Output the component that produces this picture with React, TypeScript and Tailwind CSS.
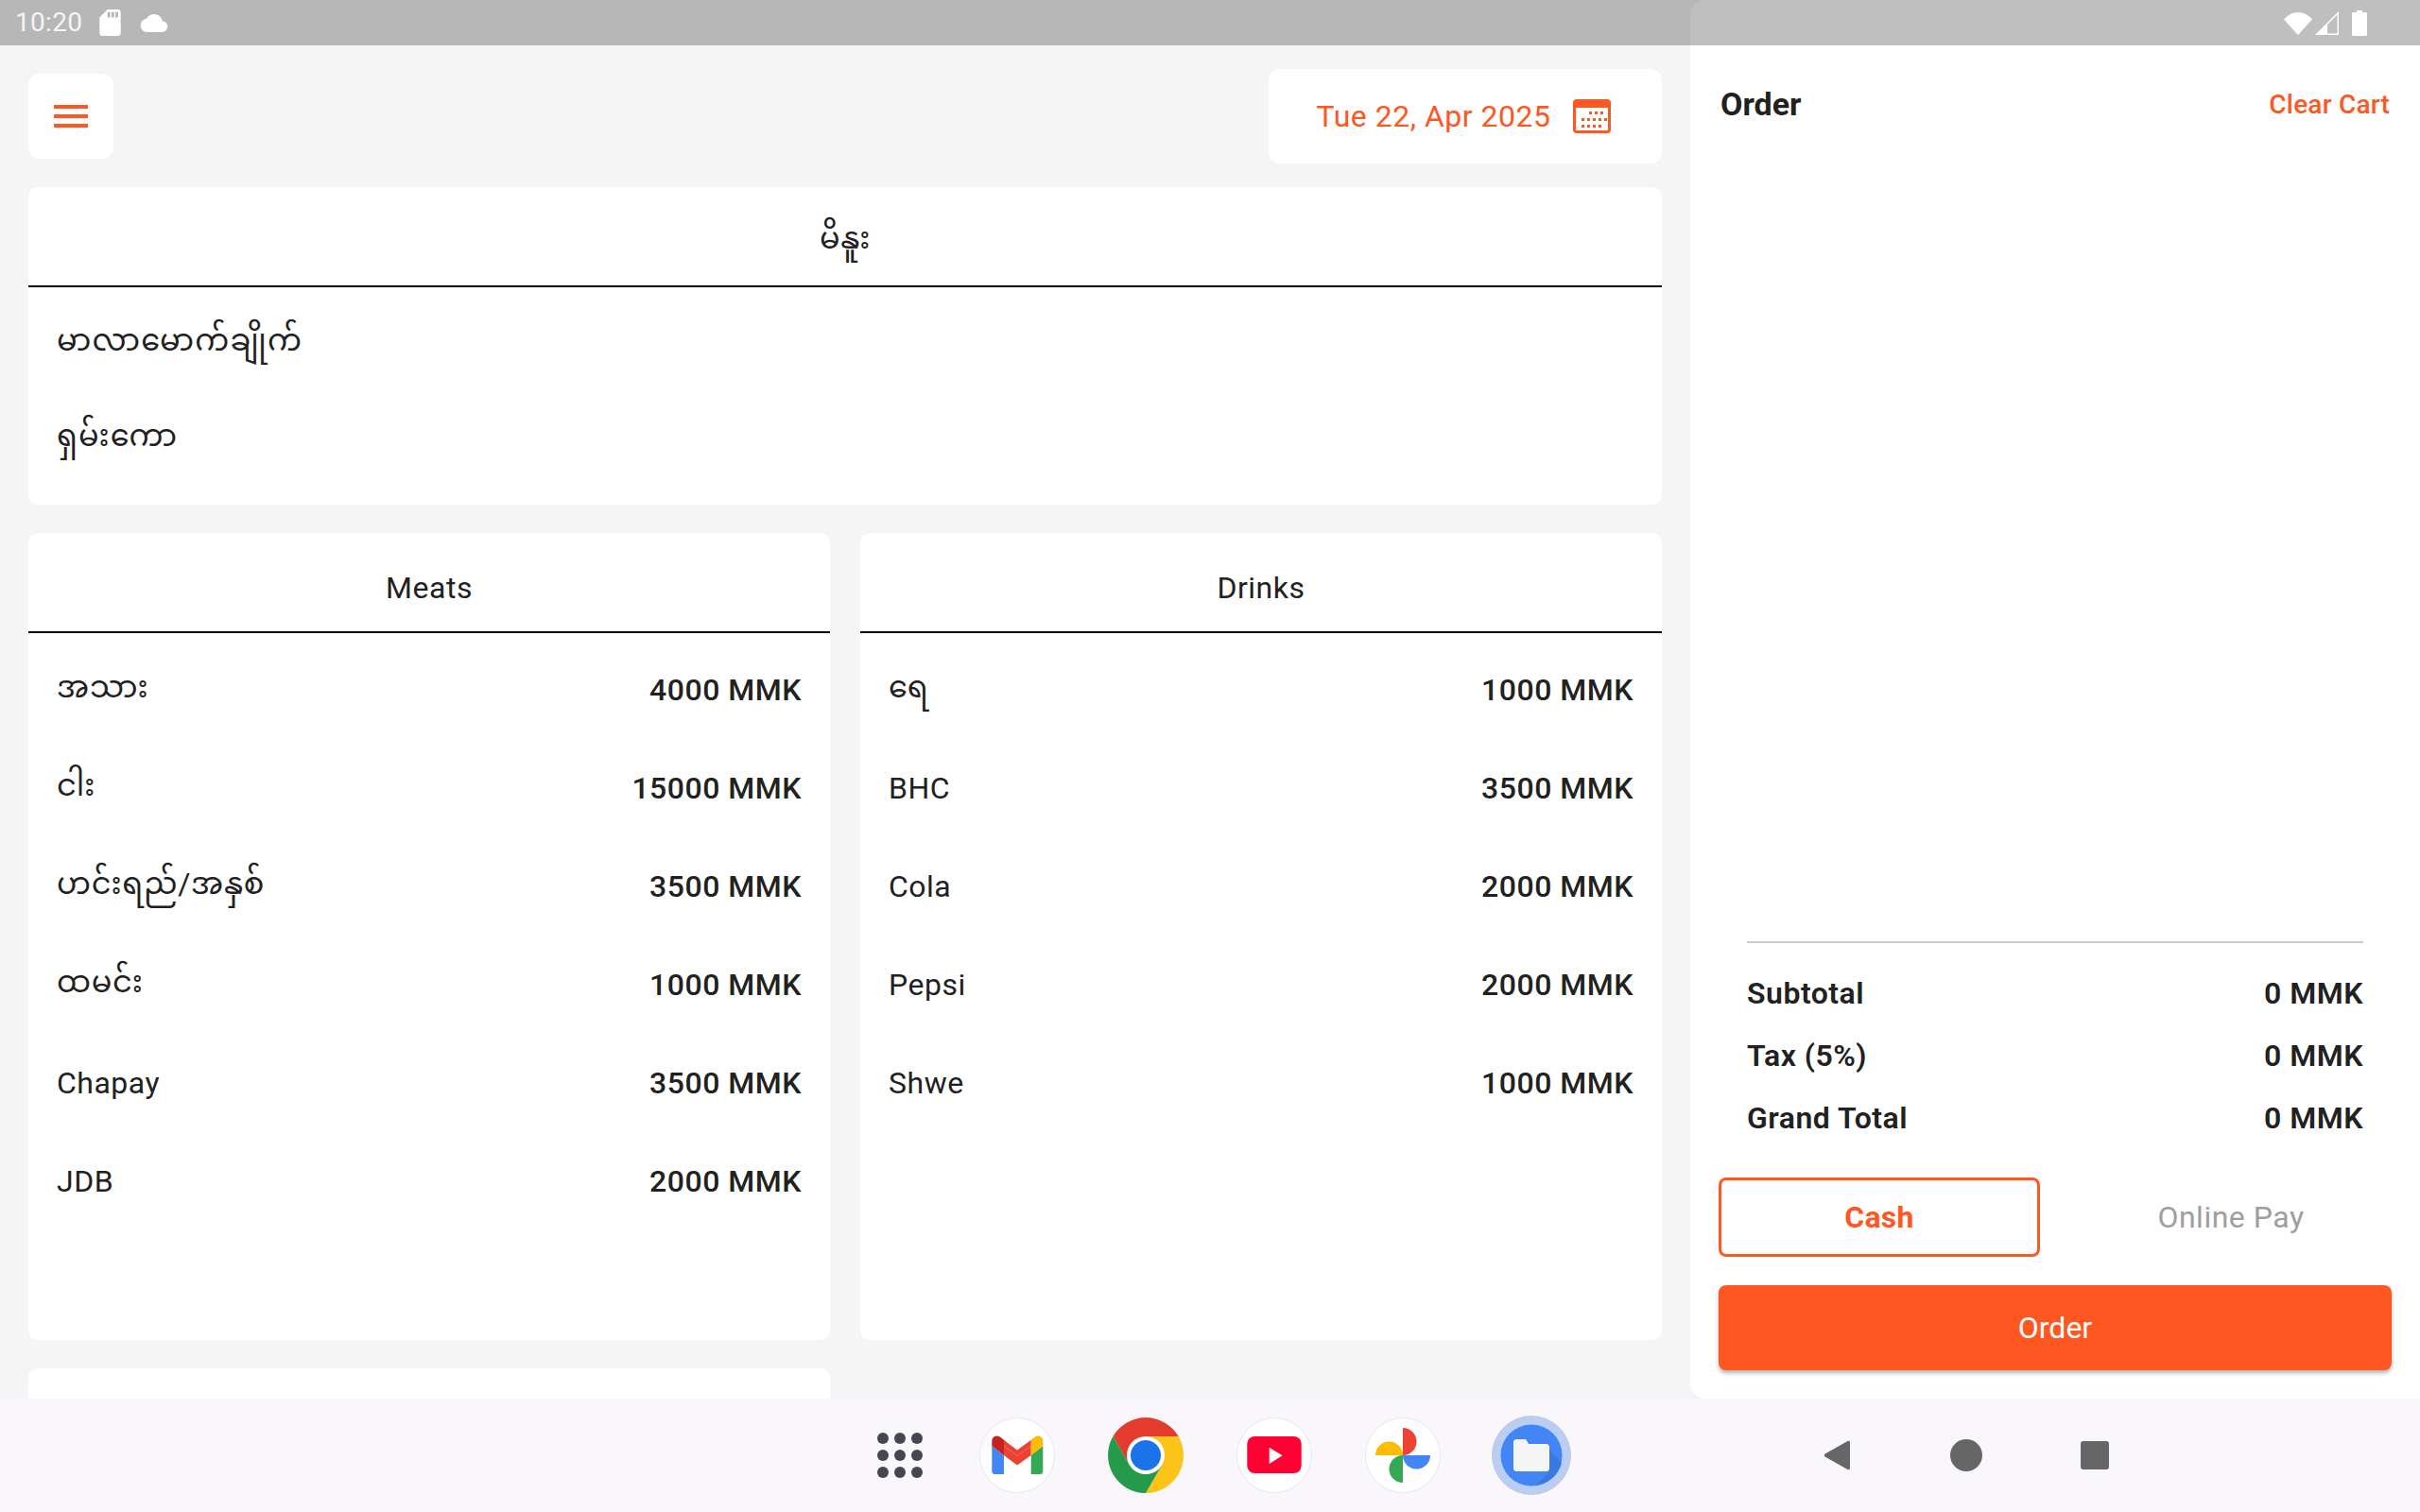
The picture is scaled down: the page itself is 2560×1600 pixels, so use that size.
const menuItems = ["မာလာမောက်ချိုက်", "ရှမ်းကော"];

const meats = [
  { name: "အသား", price: "4000 MMK", burmese: true },
  { name: "ငါး", price: "15000 MMK", burmese: true },
  { name: "ဟင်းရည်/အနှစ်", price: "3500 MMK", burmese: true },
  { name: "ထမင်း", price: "1000 MMK", burmese: true },
  { name: "Chapay", price: "3500 MMK" },
  { name: "JDB", price: "2000 MMK" },
];

const drinks = [
  { name: "ရေ", price: "1000 MMK", burmese: true },
  { name: "BHC", price: "3500 MMK" },
  { name: "Cola", price: "2000 MMK" },
  { name: "Pepsi", price: "2000 MMK" },
  { name: "Shwe", price: "1000 MMK" },
];

const totals = [
  { label: "Subtotal", value: "0 MMK" },
  { label: "Tax (5%)", value: "0 MMK" },
  { label: "Grand Total", value: "0 MMK" },
];

function StatusBar() {
  return (
    <div className="absolute top-0 left-0 right-0 h-[48px] bg-black/25 flex items-center text-white/85">
      <span className="ml-[16px] text-[28px] leading-none tracking-[0.3px]">10:20</span>
      <svg viewBox="4 2 16 20" className="ml-[18px] w-[23px] h-[28px]" fill="#fff">
        <path d="M18 2h-8L4.020 8 4 20c0 1.100.9 2 2 2h12c1.100 0 2-.9 2-2V4c0-1.100-.9-2-2-2zm-6 6h-2V4h2v4zm3 0h-2V4h2v4zm3 0h-2V4h2v4z" />
      </svg>
      <svg viewBox="0 4 24 16" className="ml-[20px] w-[30px] h-[19px]" fill="#fff">
        <path d="M19.350 10.040C18.670 6.590 15.640 4 12 4 9.110 4 6.600 5.640 5.350 8.040 2.340 8.360 0 10.910 0 14c0 3.310 2.690 6 6 6h13c2.760 0 5-2.240 5-5 0-2.640-2.050-4.780-4.650-4.960z" />
      </svg>
      <div className="ml-auto mr-[56px] flex items-center">
        <svg viewBox="0 0 30 25" className="w-[30px] h-[25px]" fill="#fff">
          <path d="M0 8.500C4 4 9 1 15 1s11 3 15 7.500L15 25z" />
        </svg>
        <svg viewBox="0 0 25 25" className="ml-[3px] w-[25px] h-[25px]" fill="#fff">
          <path d="M25 0v25H0zM23.500 3.600L13 14v9.500h10.500z" />
        </svg>
        <svg viewBox="0 0 16 27" className="ml-[14px] w-[16px] h-[27px]" fill="#fff">
          <path d="M5 0h6v2h3.500c.8 0 1.500.7 1.500 1.500v22c0 .8-.7 1.500-1.500 1.500h-13C.7 27 0 26.300 0 25.500v-22C0 2.700.7 2 1.500 2H5z" />
        </svg>
      </div>
    </div>
  );
}

function CalendarIcon() {
  const dots = [
    [17, 13], [23, 13], [29, 13],
    [9, 20], [15, 20], [21, 20], [27, 20], [33, 20],
    [9, 27], [15, 27], [21, 27], [27, 27],
  ];
  return (
    <svg viewBox="0 0 40 36" className="w-[40px] h-[36px]">
      <rect width="40" height="36" rx="4" fill="#ff5722" />
      <rect x="3" y="9" width="34" height="24" rx="1" fill="#fff" />
      {dots.map(([x, y], i) => (
        <rect key={i} x={x} y={y} width="3" height="3" fill="#ff5722" />
      ))}
    </svg>
  );
}

function Card({ title, children, latin }: { title: string; children: React.ReactNode; latin?: boolean }) {
  return (
    <div className="bg-white rounded-[10px] overflow-hidden">
      <div className={`h-[106px] flex items-center justify-center border-b-2 border-black text-[32px] text-[#212121] tracking-[0.5px] ${latin ? "pt-[12px]" : "pt-[4px]"}`}>
        {title}
      </div>
      {children}
    </div>
  );
}

function PriceCard({ title, items }: { title: string; items: { name: string; price: string; burmese?: boolean }[] }) {
  return (
    <Card title={title} latin>
      <div className="h-[748px] pt-[8px] px-[30px]">
        {items.map((item) => (
          <div key={item.name} className="h-[104px] flex items-center justify-between text-[32px] text-[#212121]">
            <span className={item.burmese ? "pb-[6px] tracking-[0.7px]" : "tracking-[0.5px]"}>{item.name}</span>
            <span className="font-medium tracking-[0.5px]">{item.price}</span>
          </div>
        ))}
      </div>
    </Card>
  );
}

function LeftColumn() {
  return (
    <div className="w-[1788px] h-[1480px] overflow-hidden bg-[#f5f5f5] pt-[73px] px-[30px]">
      <div className="h-[100px] flex items-center justify-between">
        <button className="w-[90px] h-[90px] bg-white rounded-[12px] flex items-center justify-center">
          <svg viewBox="0 0 36 24" className="w-[36px] h-[24px]" fill="#ff5722">
            <rect width="36" height="4" />
            <rect y="10" width="36" height="4" />
            <rect y="20" width="36" height="4" />
          </svg>
        </button>
        <div className="w-[416px] h-[100px] bg-white rounded-[12px] flex items-center justify-center gap-[24px] pr-[3px] text-[32px] text-[#ff5722] tracking-[0.5px]">
          <span>Tue 22, Apr 2025</span>
          <CalendarIcon />
        </div>
      </div>

      <div className="mt-[25px]">
        <Card title="မိနူး">
          <div className="h-[230px] pt-[5px] px-[30px]">
            {menuItems.map((name) => (
              <div key={name} className="h-[101px] flex items-center text-[32px] text-[#212121] tracking-[1.2px]">
                {name}
              </div>
            ))}
          </div>
        </Card>
      </div>

      <div className="mt-[30px] grid grid-cols-2 gap-x-[32px] gap-y-[30px]">
        <PriceCard title="Meats" items={meats} />
        <PriceCard title="Drinks" items={drinks} />
        <div className="h-[200px] bg-white rounded-[10px]" />
      </div>
    </div>
  );
}

function OrderPanel() {
  return (
    <div className="w-[772px] h-[1480px] bg-white rounded-l-[16px] flex flex-col">
      <div className="pt-[84px] px-[32px] h-[136px] flex items-center justify-between">
        <span className="text-[34px] font-bold text-[#212121]">Order</span>
        <span className="pt-[2px] text-[28px] font-medium text-[#ff5722] tracking-[0.2px]">Clear Cart</span>
      </div>
      <div className="flex-1" />
      <div className="mx-[60px] border-t-2 border-[#cccccc] pt-[20px]">
        {totals.map((row) => (
          <div key={row.label} className="h-[66px] flex items-center justify-between text-[32px] font-semibold text-[#212121] tracking-[0.5px]">
            <span>{row.label}</span>
            <span>{row.value}</span>
          </div>
        ))}
      </div>
      <div className="mt-[30px] mx-[30px] grid grid-cols-2 gap-[32px] text-[32px]">
        <button className="h-[84px] rounded-[8px] border-[3px] border-[#ff5722] font-bold text-[#ff5722] tracking-[0.3px]">Cash</button>
        <button className="h-[84px] text-[#9e9e9e] tracking-[0.5px]">Online Pay</button>
      </div>
      <button className="mt-[30px] mb-[30px] mx-[30px] h-[90px] rounded-[8px] bg-[#ff5722] text-white text-[32px] shadow-[0_3px_4px_rgba(0,0,0,0.3)]">
        Order
      </button>
    </div>
  );
}

function AppGrid() {
  return (
    <div className="w-[56px] h-[80px] flex items-center justify-center">
      <div className="grid grid-cols-3 gap-[6px]">
        {Array.from({ length: 9 }).map((_, i) => (
          <div key={i} className="w-[12px] h-[12px] rounded-full bg-[#444752]" />
        ))}
      </div>
    </div>
  );
}

function GmailIcon() {
  return (
    <svg viewBox="0 0 80 80" className="w-[80px] h-[80px]">
      <circle cx="40" cy="40" r="39.500" fill="#fff" stroke="#e9e7ec" strokeWidth="1" />
      <path d="M13.300 30v27c0 1.700 1.300 3 3 3H26V40z" fill="#4285f4" />
      <path d="M54.700 40v20h9.600c1.700 0 3-1.300 3-3V30z" fill="#34a853" />
      <path d="M26 30l14 10.500L54.700 30v10L40 50.500 26 40z" fill="#ea4335" />
      <path d="M13.300 24.800c0-4.500 5-6.800 8.500-4.200L26 23.800V40L13.300 30z" fill="#c5221f" />
      <path d="M54.700 23.800l4.200-3.200c3.500-2.600 8.400-.3 8.400 4.200V30L54.700 40z" fill="#fbbc04" />
      <path d="M26 23.800L40 34.500l14.700-10.700V30L40 40.500 26 30z" fill="#ea4335" />
    </svg>
  );
}

function ChromeIcon() {
  return (
    <svg viewBox="0 0 80 80" className="w-[80px] h-[80px]">
      <path d="M5.400 20A40 40 0 0 1 74.600 20H40L22.700 50z" fill="#e33b2e" />
      <path d="M74.600 20A40 40 0 0 1 40 80L57.300 50 40 20z" fill="#fcc318" />
      <path d="M40 80A40 40 0 0 1 5.400 20L22.700 50H57.300z" fill="#249a4a" />
      <circle cx="40" cy="40" r="20" fill="#fff" />
      <circle cx="40" cy="40" r="16" fill="#1a73e8" />
    </svg>
  );
}

function YoutubeIcon() {
  return (
    <svg viewBox="0 0 80 80" className="w-[80px] h-[80px]">
      <circle cx="40" cy="40" r="39.500" fill="#fff" stroke="#e9e7ec" strokeWidth="1" />
      <rect x="11.300" y="20" width="57.400" height="39" rx="8" fill="#ff0033" />
      <path d="M34.700 31.700L48.600 40.300 34.700 49z" fill="#fff" />
    </svg>
  );
}

function PhotosIcon() {
  return (
    <svg viewBox="0 0 80 80" className="w-[80px] h-[80px]">
      <circle cx="40" cy="40" r="39.500" fill="#fff" stroke="#e9e7ec" strokeWidth="1" />
      <path d="M40 40V11a14.500 14.500 0 0 1 0 29z" fill="#ea4335" />
      <path d="M40 40H11a14.500 14.500 0 0 1 29 0z" fill="#fbbc04" />
      <path d="M40 40V69a14.500 14.500 0 0 1 0-29z" fill="#34a853" />
      <path d="M40 40H69a14.500 14.500 0 0 1-29 0z" fill="#4285f4" />
    </svg>
  );
}

function FilesIcon() {
  return (
    <svg viewBox="0 0 84 84" className="w-[84px] h-[84px] -mx-[2px]">
      <circle cx="42" cy="42" r="41.500" fill="#b9cdf5" stroke="#c9c7cc" strokeWidth="1" />
      <circle cx="42" cy="42" r="32.500" fill="#4285f4" />
      <path d="M61 59L46 74.200a32.500 32.500 0 0 0 28-24L61 36z" fill="#3b78e0" />
      <path d="M23 28c0-1.600 1.400-3 3-3h9c1 0 1.500.5 2 1.500L39 30h19c1.600 0 3 1.400 3 3v23c0 1.600-1.400 3-3 3H26c-1.600 0-3-1.400-3-3z" fill="#f5f5f5" />
    </svg>
  );
}

function BottomBar() {
  return (
    <div className="h-[120px] bg-[#f9f7fc] flex items-center pl-[924px]">
      <div className="flex items-center gap-[56px]">
        <AppGrid />
        <GmailIcon />
        <ChromeIcon />
        <YoutubeIcon />
        <PhotosIcon />
        <FilesIcon />
      </div>
      <div className="ml-[264px] flex items-center gap-[96px]">
        <svg viewBox="0 0 40 40" className="w-[40px] h-[40px]" fill="#666666">
          <path d="M33 6.500v27c0 1.500-1.700 2.300-2.900 1.200L6.500 21.500c-.8-.8-.8-2.200 0-3L30.100 5.300c1.200-1.100 2.900-.3 2.900 1.200z" />
        </svg>
        <svg viewBox="0 0 40 40" className="w-[40px] h-[40px]" fill="#666666">
          <circle cx="20" cy="20" r="17" />
        </svg>
        <svg viewBox="0 0 40 40" className="w-[40px] h-[40px]" fill="#666666">
          <rect x="5" y="5" width="30" height="30" rx="3" />
        </svg>
      </div>
    </div>
  );
}

export default function App() {
  return (
    <div className="relative w-[2560px] h-[1600px] overflow-hidden bg-[#f5f5f5] font-['Roboto','Noto_Sans_Myanmar','Padauk','Noto_Sans',sans-serif]">
      <div className="flex">
        <LeftColumn />
        <OrderPanel />
      </div>
      <BottomBar />
      <StatusBar />
    </div>
  );
}
